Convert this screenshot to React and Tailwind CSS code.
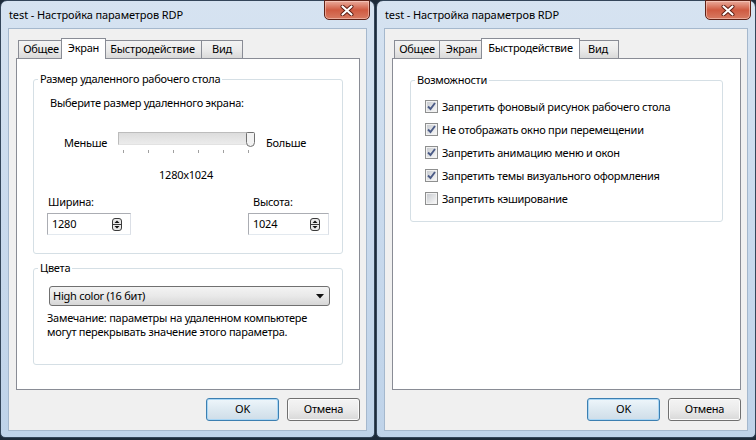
import React from "react";

const TABS = [
  { id: "general", label: "Общее", w: "w-[46px]" },
  { id: "display", label: "Экран", w: "w-[45px]" },
  { id: "perf", label: "Быстродействие", w: "w-[99px]" },
  { id: "view", label: "Вид", w: "w-[42px]" },
];

const CloseButton = () => (
  <div className="-mt-px flex h-[20px] w-[46px] items-center justify-center rounded-b-[5px] border border-[#5e2217] bg-gradient-to-b from-[#e9ab9c] via-[#cf5a41] to-[#d77a62] shadow-[inset_0_0_0_1px_rgba(255,220,210,0.5)]">
    <svg width="14" height="11" viewBox="0 0 14 11">
      <path d="M2.5 1.5 L11.5 9.5 M11.5 1.5 L2.5 9.5" stroke="#5a1a10" strokeWidth="4" strokeLinecap="round" />
      <path d="M2.5 1.5 L11.5 9.5 M11.5 1.5 L2.5 9.5" stroke="#ffffff" strokeWidth="2.2" strokeLinecap="round" />
    </svg>
  </div>
);

const Tabs = ({ active }) => (
  <div className="ml-[2px] flex h-[20px] items-end">
    {TABS.map((t, i) =>
      t.id === active ? (
        <div
          key={t.id}
          className={`${t.w} relative z-10 -mx-[2px] -mb-px flex h-[21px] shrink-0 items-start justify-center border border-b-0 border-[#898c95] bg-white pt-[1px] ${i > 0 ? "-ml-[3px]" : ""}`}
        >
          <span className="whitespace-nowrap">{t.label}</span>
        </div>
      ) : (
        <div
          key={t.id}
          className={`${t.w} flex h-[18px] shrink-0 items-center justify-center border border-b-0 border-[#898c95] bg-gradient-to-b from-[#f3f3f3] via-[#ebebeb] to-[#d9d9d9] ${i > 0 ? "-ml-px" : ""}`}
        >
          <span className="whitespace-nowrap">{t.label}</span>
        </div>
      )
    )}
  </div>
);

const GroupBox = ({ title, className, children }) => (
  <div className={`relative rounded-[3px] border border-[#d5dfe5] ${className}`}>
    <span className="absolute -top-[9px] left-[4px] bg-white px-[2px] leading-[16px]">{title}</span>
    {children}
  </div>
);

const Button = ({ label, primary }) => (
  <div
    className={`flex h-[23px] w-[73px] items-center justify-center rounded-[3px] border ${
      primary
        ? "border-[#3c7fb1] bg-gradient-to-b from-[#eef6fb] via-[#dde9f1] to-[#cfdde8] shadow-[inset_0_0_0_1px_#a8d6f5]"
        : "border-[#707070] bg-gradient-to-b from-[#f4f4f4] via-[#ebebeb] to-[#d8d8d8] shadow-[inset_0_0_0_1px_#fbfbfb]"
    }`}
  >
    {label}
  </div>
);

const Spinner = () => (
  <svg width="10" height="13" viewBox="0 0 10 13">
    <rect x="0.5" y="0.5" width="9" height="12" rx="2.5" fill="#e9e9e9" stroke="#3a3a3a" />
    <line x1="0.5" y1="6.5" x2="9.5" y2="6.5" stroke="#3a3a3a" />
    <path d="M2.5 5 L5 2.5 L7.5 5 Z" fill="#111" />
    <path d="M2.5 8 L5 10.5 L7.5 8 Z" fill="#111" />
  </svg>
);

const SpinBox = ({ value, w }) => (
  <div className={`${w} flex h-[22px] items-center justify-between border border-[#abadb3] border-b-[#e3e9ef] border-r-[#dbdfe6] bg-white pl-[4px] pr-[8px]`}>
    <span>{value}</span>
    <Spinner />
  </div>
);

const Checkbox = ({ checked }) => (
  <span className="flex h-[13px] w-[13px] shrink-0 items-center justify-center border border-[#8e8f8f] bg-white">
    <span className="relative flex h-[11px] w-[11px] items-center justify-center border border-[#f2f2f2] bg-gradient-to-br from-[#c9ccd1] to-[#f7f7f7]">
      {checked && (
        <svg className="absolute -left-[1px] -top-[1px]" width="11" height="11" viewBox="0 0 11 11">
          <path d="M2 5.5 L4.5 8 L9 2" fill="none" stroke="#4b5b86" strokeWidth="1.9" />
        </svg>
      )}
    </span>
  </span>
);

const DisplayTab = () => (
  <div className="flex flex-col px-[16px] pt-[20px]">
    <GroupBox title="Размер удаленного рабочего стола" className="h-[175px]">
      <div className="pl-[16px] pt-[15px] leading-[16px]">Выберите размер удаленного экрана:</div>
      <div className="mt-[21px] flex items-start pl-[30px]">
        <span className="mt-[3px] w-[54px] leading-[16px]">Меньше</span>
        <div className="flex w-[136px] flex-col">
          <div className="relative h-[13px] border border-[#bcbcbc] border-b-[#e2e2e2] bg-gradient-to-b from-[#dcdcdc] to-[#ececec]">
            <svg className="absolute -right-[2px] -top-[1px]" width="9" height="15" viewBox="0 0 9 15">
              <path d="M0.5 1.5 Q0.5 0.5 1.5 0.5 L7.5 0.5 Q8.5 0.5 8.5 1.5 L8.5 10.5 Q8.5 14.5 4.5 14.5 Q0.5 14.5 0.5 10.5 Z" fill="#f2f2f2" stroke="#707070" />
            </svg>
          </div>
          <div className="mt-[5px] flex justify-between px-[5px]">
            {[0, 1, 2, 3, 4, 5].map((k) => (
              <span key={k} className="h-[3px] w-px bg-[#a0a0a0]" />
            ))}
          </div>
          <div className="mt-[14px] text-center leading-[16px]">1280x1024</div>
        </div>
        <span className="ml-[12px] mt-[3px] leading-[16px]">Больше</span>
      </div>
      <div className="mt-[11px] flex pl-[13px]">
        <div className="flex w-[201px] flex-col">
          <span className="pl-[1px] leading-[16px]">Ширина:</span>
          <div className="mt-[3px]">
            <SpinBox value="1280" w="w-[84px]" />
          </div>
        </div>
        <div className="flex flex-col">
          <span className="pl-[5px] leading-[16px]">Высота:</span>
          <div className="mt-[3px]">
            <SpinBox value="1024" w="w-[81px]" />
          </div>
        </div>
      </div>
    </GroupBox>
    <GroupBox title="Цвета" className="mt-[14px] h-[97px]">
      <div className="pl-[15px] pr-[12px] pt-[17px]">
        <div className="flex h-[20px] items-center justify-between rounded-[3px] border border-[#707070] bg-gradient-to-b from-[#f3f3f3] via-[#e9e9e9] to-[#d6d6d6] pl-[3px] pr-[5px]">
          <span>High color (16 бит)</span>
          <svg width="8" height="5" viewBox="0 0 8 5">
            <path d="M0 0 L8 0 L4 4.5 Z" fill="#111" />
          </svg>
        </div>
      </div>
      <div className="mt-[5px] whitespace-nowrap pl-[13px] leading-[14px]">
        Замечание: параметры на удаленном компьютере
        <br />
        могут перекрывать значение этого параметра.
      </div>
    </GroupBox>
  </div>
);

const PerfTab = () => {
  const items = [
    ["Запретить фоновый рисунок рабочего стола", true],
    ["Не отображать окно при перемещении", true],
    ["Запретить анимацию меню и окон", true],
    ["Запретить темы визуального оформления", true],
    ["Запретить кэширование", false],
  ];
  return (
    <div className="flex flex-col pl-[17px] pr-[17px] pt-[21px]">
      <GroupBox title="Возможности" className="h-[142px]">
        <div className="flex flex-col gap-[10px] pl-[14px] pt-[19px]">
          {items.map(([label, on]) => (
            <label key={label} className="flex h-[13px] items-center gap-[4px]">
              <Checkbox checked={on} />
              <span className="whitespace-nowrap leading-[16px]">{label}</span>
            </label>
          ))}
        </div>
      </GroupBox>
    </div>
  );
};

const Window = ({ tab, className, children }) => (
  <div className={`flex h-[438px] flex-col rounded-t-[7px] rounded-b-[5px] border border-[#34465a] bg-gradient-to-b from-[#d6e3f1] via-[#c9daed] to-[#bfd3e9] ${className}`}>
    <div className="flex h-[27px] shrink-0 items-start justify-between pl-[8px] pr-[4px]">
      <span className="pt-[6px] text-[11px] leading-[16px] tracking-[-0.1px] text-black">test - Настройка параметров RDP</span>
      <CloseButton />
    </div>
    <div className="mb-[6px] ml-[7px] mr-[7px] flex flex-1 flex-col border border-[#a5b8cd] bg-[#f0f0f0] pl-[7px] pr-[6px] pt-[9px]">
      <Tabs active={tab} />
      <div className="h-[332px] border border-[#898c95] bg-white">{children}</div>
      <div className="flex justify-end gap-[8px] pt-[8px]">
        <Button label="OK" primary />
        <Button label="Отмена" />
      </div>
    </div>
  </div>
);

export default function App() {
  return (
    <div className="flex h-[440px] w-[756px] overflow-hidden bg-[#1d2b3a] font-['Noto_Sans',sans-serif] text-[11px] tracking-[-0.25px] text-black">
      <Window tab="display" className="w-[375px]">
        <DisplayTab />
      </Window>
      <Window tab="perf" className="ml-[1px] w-[380px]">
        <PerfTab />
      </Window>
    </div>
  );
}
